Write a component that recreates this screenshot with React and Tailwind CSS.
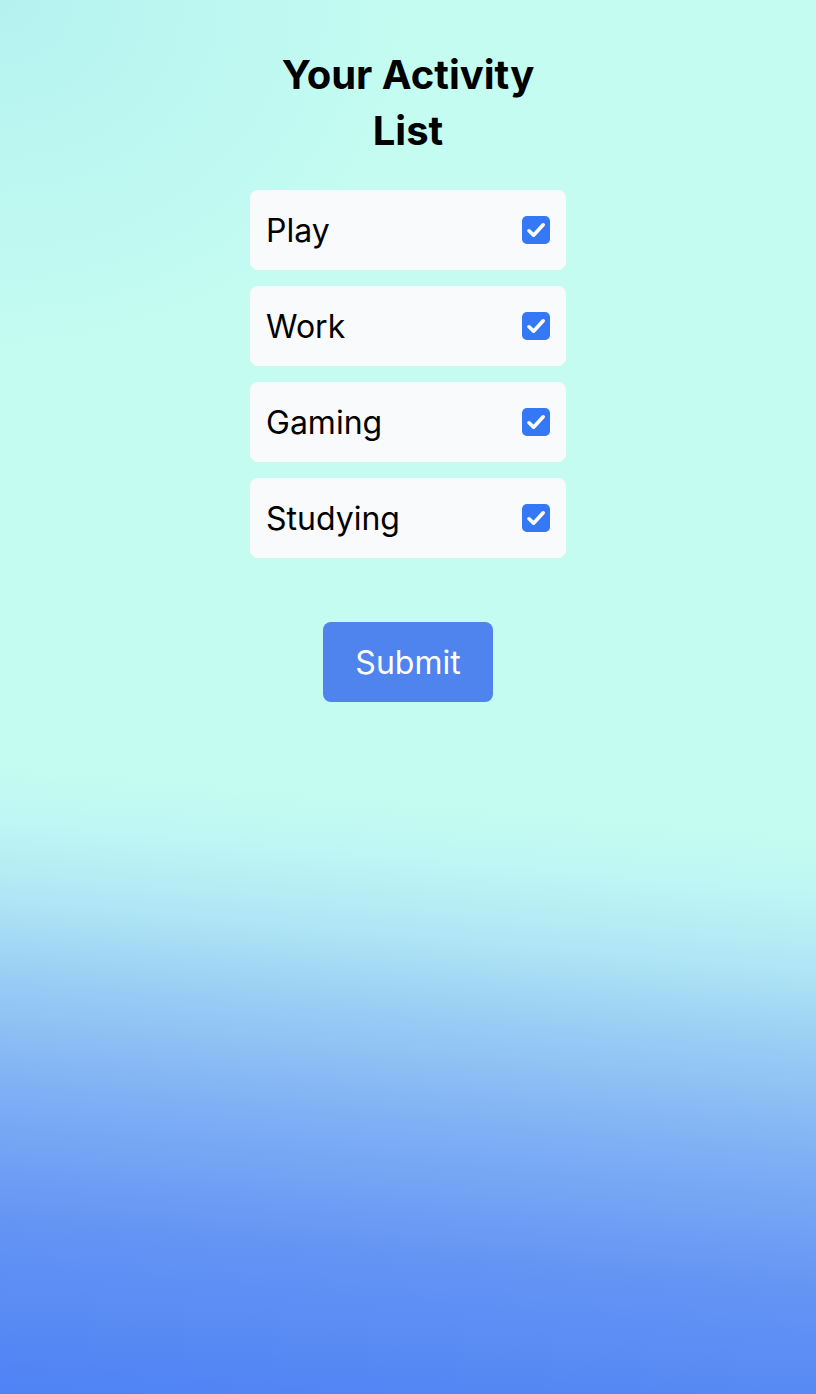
import React from "react";

const items = ["Play", "Work", "Gaming", "Studying"];

function Check() {
  return (
    <span className="flex h-7 w-7 items-center justify-center rounded-[5px] bg-[#3578f6]">
      <svg viewBox="0 0 28 28" className="h-7 w-7" fill="none">
        <path d="M7 14.8l4.6 4.4L21.2 8.8" stroke="white" strokeWidth="3.6" strokeLinecap="round" strokeLinejoin="round" />
      </svg>
    </span>
  );
}

export default function App() {
  return (
    <div
      className="relative min-h-[1394px] w-full font-['Inter',sans-serif] text-black"
      style={{
        background:
          "radial-gradient(ellipse 420px 360px at 0% 0%, rgba(150,220,235,0.32), rgba(150,220,235,0) 100%), linear-gradient(185deg, #c4fcf2 0%, #c4fcf2 57%, #bef6f4 61%, #b0e6f5 66%, #98cbf4 72%, #80b0f4 79%, #6495f4 88%, #4f82f4 100%)",
      }}
    >
      <div className="flex flex-col items-center pt-[47px]">
        <h1 className="w-[300px] text-center text-[40px] font-bold leading-[56px]">Your Activity List</h1>
        <div className="mt-[31px] flex w-[316px] flex-col gap-4">
          {items.map((it) => (
            <label key={it} className="flex h-20 items-center justify-between rounded-lg bg-[#f8fafc] px-4">
              <span className="pt-[2px] text-[32px] leading-none">{it}</span>
              <Check />
            </label>
          ))}
        </div>
        <button className="mt-16 flex h-20 w-[170px] items-center justify-center rounded-lg bg-[#4f83ee] pt-[2px] text-[32px] text-white">
          Submit
        </button>
      </div>
    </div>
  );
}
